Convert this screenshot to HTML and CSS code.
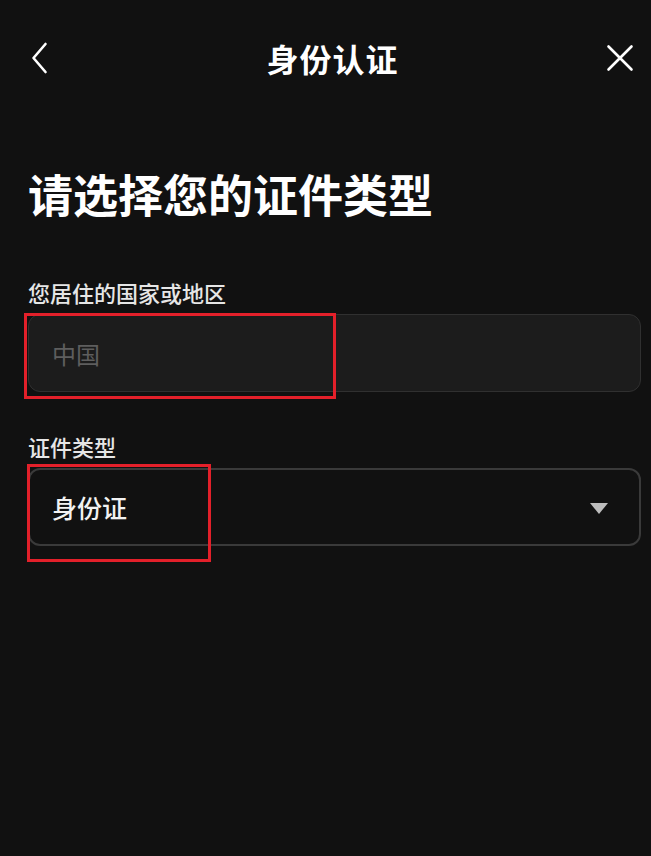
FILE: index.html
```html
<!DOCTYPE html>
<html lang="zh-CN">
<head>
<meta charset="utf-8">
<title>身份认证</title>
<link rel="stylesheet" href="styles.css">
</head>
<body>
<div class="page">
  <header class="topbar">
    <button class="icon-btn back" aria-label="返回">
      <svg width="18" height="32" viewBox="0 0 18 32"><path d="M14.5 2 L2.5 16 L14.5 30" fill="none" stroke="#fff" stroke-width="2.6" stroke-linecap="round" stroke-linejoin="round"/></svg>
    </button>
    <h1 class="title">身份认证</h1>
    <button class="icon-btn close" aria-label="关闭">
      <svg width="28" height="28" viewBox="0 0 28 28"><path d="M2.5 2.5 L25.5 25.5 M25.5 2.5 L2.5 25.5" fill="none" stroke="#fff" stroke-width="2.6" stroke-linecap="round"/></svg>
    </button>
  </header>

  <main class="content">
    <h2 class="heading">请选择您的证件类型</h2>

    <section class="field field-country">
      <label class="label">您居住的国家或地区</label>
      <div class="box input">
        <span class="placeholder">中国</span>
        <span class="mark mark-1"></span>
      </div>
    </section>

    <section class="field field-type">
      <label class="label">证件类型</label>
      <div class="box select">
        <span class="value">身份证</span>
        <span class="caret"></span>
        <span class="mark mark-2"></span>
      </div>
    </section>
  </main>
</div>
</body>
</html>
```

FILE: styles.css
```css
* { box-sizing: border-box; }
html, body {
  margin: 0;
  padding: 0;
  background: #111111;
  color: #ffffff;
  font-family: "Noto Sans CJK SC", "Noto Sans", sans-serif;
}
.page {
  width: 651px;
  min-height: 856px;
  background: #111111;
}
.topbar {
  height: 56px;
  margin-top: 30px;
  display: flex;
  align-items: center;
  justify-content: space-between;
  padding: 0 17px 0 31px;
  position: relative;
}
.icon-btn {
  background: none;
  border: 0;
  padding: 0;
  display: flex;
  align-items: center;
  justify-content: center;
  cursor: pointer;
}
.back { width: 18px; height: 32px; }
.close { width: 28px; height: 28px; }
.title {
  margin: 0;
  font-size: 32px;
  line-height: 32px;
  font-weight: 700;
  flex: 1;
  text-align: center;
  color: #ffffff;
  letter-spacing: 1px;
  padding-left: 10px;
}
.content {
  padding: 0 10px 0 28px;
}
.heading {
  margin: 85px 0 0 0;
  font-size: 45px;
  line-height: 45px;
  font-weight: 700;
  color: #ffffff;
  letter-spacing: 0;
}
.field { display: flex; flex-direction: column; }
.field-country { margin-top: 65px; }
.field-type { margin-top: 43px; }
.label {
  font-size: 22px;
  line-height: 22px;
  font-weight: 500;
  color: #e6e6e6;
  margin-bottom: 11px;
}
.box {
  position: relative;
  height: 78px;
  width: 613px;
  border-radius: 12px;
  display: flex;
  align-items: center;
}
.input {
  background: #1c1c1c;
  border: 1.5px solid #303030;
  padding-left: 23px;
}
.placeholder {
  font-size: 24px;
  color: #5e5e5e;
}
.select {
  background: #111111;
  border: 2px solid #3a3a3a;
  padding: 0 31px 0 22px;
  justify-content: space-between;
}
.value {
  font-size: 25px;
  color: #f2f2f2;
  font-weight: 500;
}
.caret {
  width: 0;
  height: 0;
  border-left: 9px solid transparent;
  border-right: 9px solid transparent;
  border-top: 11px solid #bdbdbd;
  margin-top: 2px;
}
.mark {
  position: absolute;
  border: 3px solid #e3202a;
  pointer-events: none;
}
.mark-1 {
  left: -5px;
  top: -2px;
  width: 312px;
  height: 86px;
}
.mark-2 {
  left: -3px;
  top: -6px;
  width: 184px;
  height: 98px;
}
```
